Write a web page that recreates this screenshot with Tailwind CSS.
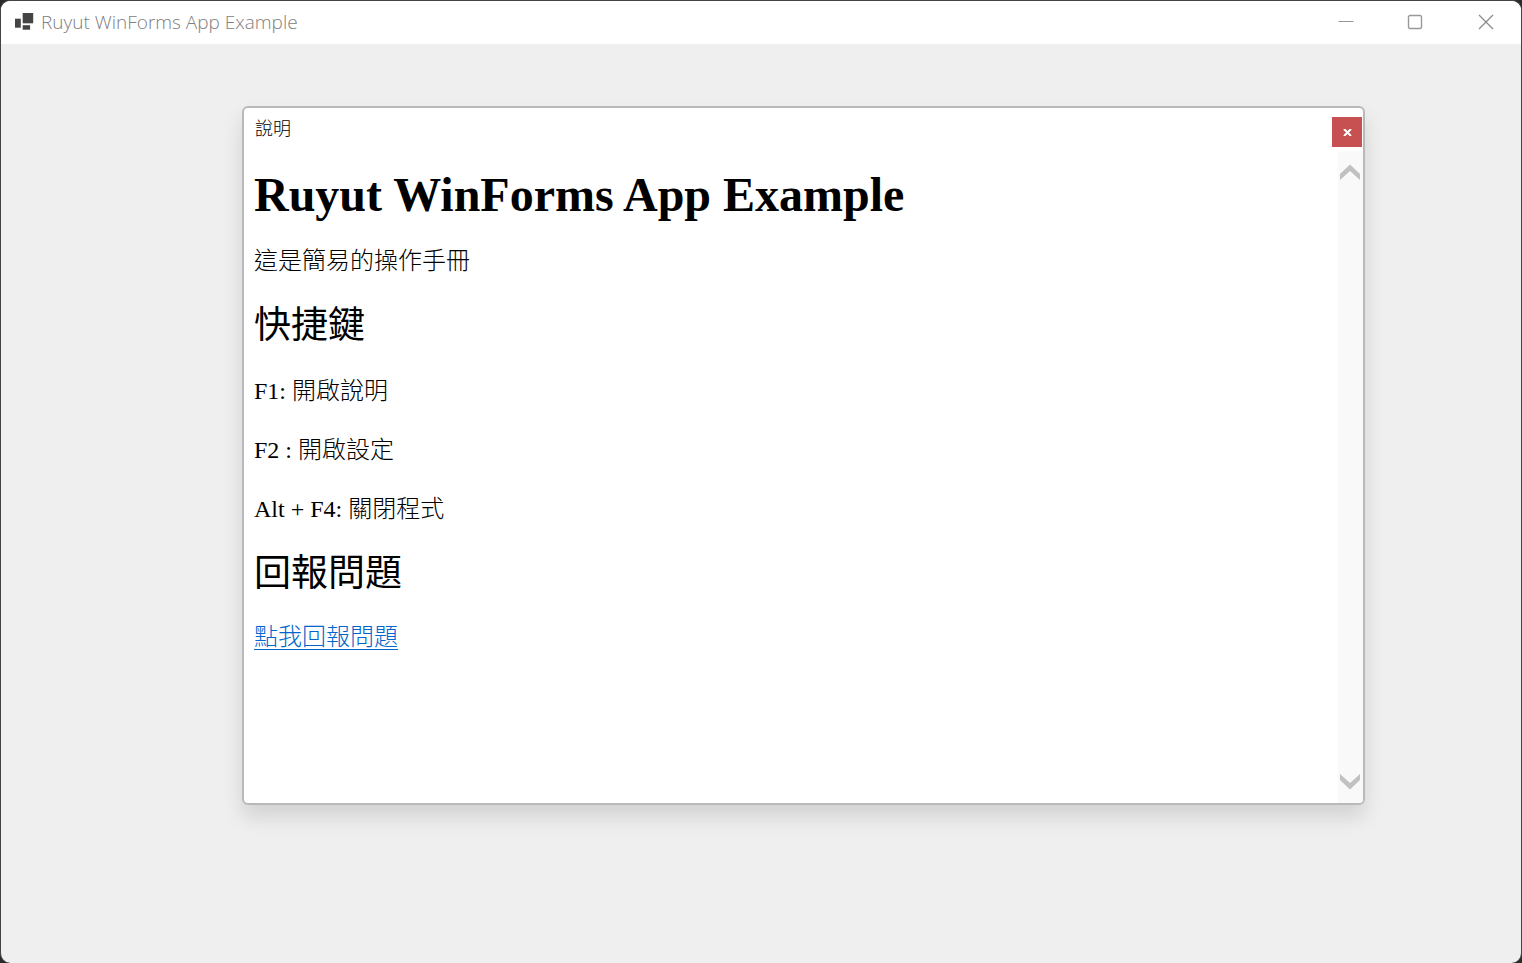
<!DOCTYPE html>
<html lang="zh-Hant">
<head>
<meta charset="utf-8">
<meta name="viewport" content="width=device-width, initial-scale=1">
<title>Ruyut WinForms App Example</title>
<script src="https://cdn.jsdelivr.net/npm/@tailwindcss/browser@4"></script>
</head>
<body class="flex min-h-screen bg-[#2b2b2b]">
<div class="flex min-h-screen flex-1 flex-col overflow-hidden rounded-[10px] border border-b-0 border-[#434343] bg-[#efefef]">
  <header class="flex h-[43px] items-center bg-white pb-[2px] pl-[14px] font-['Open_Sans',sans-serif]">
    <svg class="mr-[7px] h-[18px] w-[19px] shrink-0" viewBox="0 0 19 18" fill="#444" aria-hidden="true">
      <rect x="7.700" y="0" width="10.500" height="10.300"/><rect x="0" y="5.700" width="5.800" height="9"/><rect x="7.700" y="12.200" width="7.400" height="4.500"/>
    </svg>
    <span class="flex-1 text-[19px] leading-6 font-light text-[#808080]">Ruyut WinForms App Example</span>
    <div class="flex h-full">
      <button type="button" aria-label="Minimize" class="flex w-[69px] items-center justify-center">
        <svg class="h-4 w-4" viewBox="0 0 16 16" fill="none" stroke="#999"><path d="M0.5 7.500H15.5"/></svg>
      </button>
      <button type="button" aria-label="Maximize" class="flex w-[69px] items-center justify-center">
        <svg class="h-4 w-4" viewBox="0 0 16 16" fill="none" stroke="#999" stroke-width="1.4"><rect x="1.500" y="1.500" width="13" height="13" rx="1.500"/></svg>
      </button>
      <button type="button" aria-label="Close" class="flex w-[72px] items-center justify-center pl-[2px]">
        <svg class="h-4 w-4" viewBox="0 0 16 16" fill="none" stroke="#888" stroke-width="1.2"><path d="M1 1L15 15M15 1L1 15"/></svg>
      </button>
    </div>
  </header>
  <main class="flex flex-1 pt-[62px] pr-[156px] pb-[158px] pl-[241px]">
    <section role="dialog" aria-labelledby="help-title" class="flex flex-1 flex-col overflow-hidden rounded-md border-2 border-[#b9b9b9] bg-white text-black shadow-[0_12px_20px_rgba(0,0,0,0.12)]">
      <div class="flex h-[43px] items-start justify-between pt-[7px] pl-[11px]">
        <span id="help-title" class="font-['Noto_Sans_CJK_TC',sans-serif] text-[18px] leading-6 font-light">說明</span>
        <button type="button" aria-label="關閉" class="mt-[2px] mr-px flex size-[30px] items-center justify-center bg-[#c75050]">
          <svg class="h-[7px] w-[9px]" viewBox="0 0 9 7" fill="none" stroke="#fff" stroke-width="2"><path d="M1 0L8 7M8 0L1 7"/></svg>
        </button>
      </div>
      <div class="flex flex-1">
        <article class="flex-1 pt-4 pl-[10px] font-['Liberation_Serif','Noto_Sans_CJK_TC',serif] text-2xl leading-7 font-light">
          <h1 class="text-5xl leading-14 font-bold">Ruyut WinForms App Example</h1>
          <p class="mt-6">這是簡易的操作手冊</p>
          <h2 class="mt-[29px] text-[37px] leading-11 font-normal">快捷鍵</h2>
          <p class="mt-[29px]">F1: 開啟說明</p>
          <p class="mt-[31px]">F2 : 開啟設定</p>
          <p class="mt-[31px]">Alt + F4: 關閉程式</p>
          <h2 class="mt-[29px] text-[37px] leading-11 font-normal">回報問題</h2>
          <p class="mt-[27px]"><a href="#report" class="text-[#0066cc] underline decoration-1 underline-offset-4">點我回報問題</a></p>
        </article>
        <div class="flex w-[25px] flex-col justify-between bg-[#f9f9f9] pt-[13px] pb-[13px] pl-[2px]">
          <button type="button" aria-label="Scroll up"><svg class="block h-4 w-5" viewBox="0 0 20 16" fill="#c1c1c1"><path d="M0 10L10 0.500L20 10V16L10 7L0 16Z"/></svg></button>
          <button type="button" aria-label="Scroll down"><svg class="block h-4 w-5" viewBox="0 0 20 16" fill="#c1c1c1"><path d="M0 6L10 15.500L20 6V0L10 9L0 0Z"/></svg></button>
        </div>
      </div>
    </section>
  </main>
</div>
</body>
</html>
